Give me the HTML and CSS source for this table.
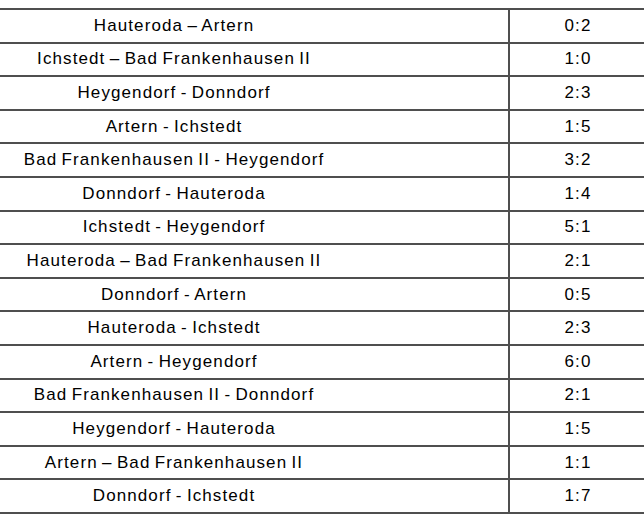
FILE: index.html
```html
<!DOCTYPE html>
<html>
<head>
<meta charset="utf-8">
<link rel="stylesheet" href="styles.css">
</head>
<body>
<table class="results">
<tbody>
<tr><td class="match">Hauteroda – Artern</td><td class="score">0:2</td></tr>
<tr><td class="match">Ichstedt – Bad Frankenhausen II</td><td class="score">1:0</td></tr>
<tr><td class="match">Heygendorf - Donndorf</td><td class="score">2:3</td></tr>
<tr><td class="match">Artern - Ichstedt</td><td class="score">1:5</td></tr>
<tr><td class="match">Bad Frankenhausen II - Heygendorf</td><td class="score">3:2</td></tr>
<tr><td class="match">Donndorf - Hauteroda</td><td class="score">1:4</td></tr>
<tr><td class="match">Ichstedt - Heygendorf</td><td class="score">5:1</td></tr>
<tr><td class="match">Hauteroda – Bad Frankenhausen II</td><td class="score">2:1</td></tr>
<tr><td class="match">Donndorf - Artern</td><td class="score">0:5</td></tr>
<tr><td class="match">Hauteroda - Ichstedt</td><td class="score">2:3</td></tr>
<tr><td class="match">Artern - Heygendorf</td><td class="score">6:0</td></tr>
<tr><td class="match">Bad Frankenhausen II - Donndorf</td><td class="score">2:1</td></tr>
<tr><td class="match">Heygendorf - Hauteroda</td><td class="score">1:5</td></tr>
<tr><td class="match">Artern – Bad Frankenhausen II</td><td class="score">1:1</td></tr>
<tr><td class="match">Donndorf - Ichstedt</td><td class="score">1:7</td></tr>
</tbody>
</table>
</body>
</html>
```
FILE: styles.css
```css
html, body {
  margin: 0;
  padding: 0;
  background: #ffffff;
  overflow: hidden;
}
body {
  padding-top: 8px;
  font-family: "Liberation Sans", Arial, sans-serif;
  font-size: 17px;
  letter-spacing: 1.1px;
  word-spacing: -1.5px;
  color: #000000;
}
.results {
  border-collapse: collapse;
  margin-left: -160px;
  width: 806px;
  table-layout: fixed;
}
.results td {
  border: 2px solid #4f4f4f;
  border-left: none;
  border-right: none;
  height: 31.6px;
  padding: 0;
  text-align: center;
  vertical-align: middle;
  line-height: 18px;
}
.results td.match {
  width: 668px;
  border-right: 2px solid #4f4f4f;
}
.results td.score {
  width: 136px;
}
```
